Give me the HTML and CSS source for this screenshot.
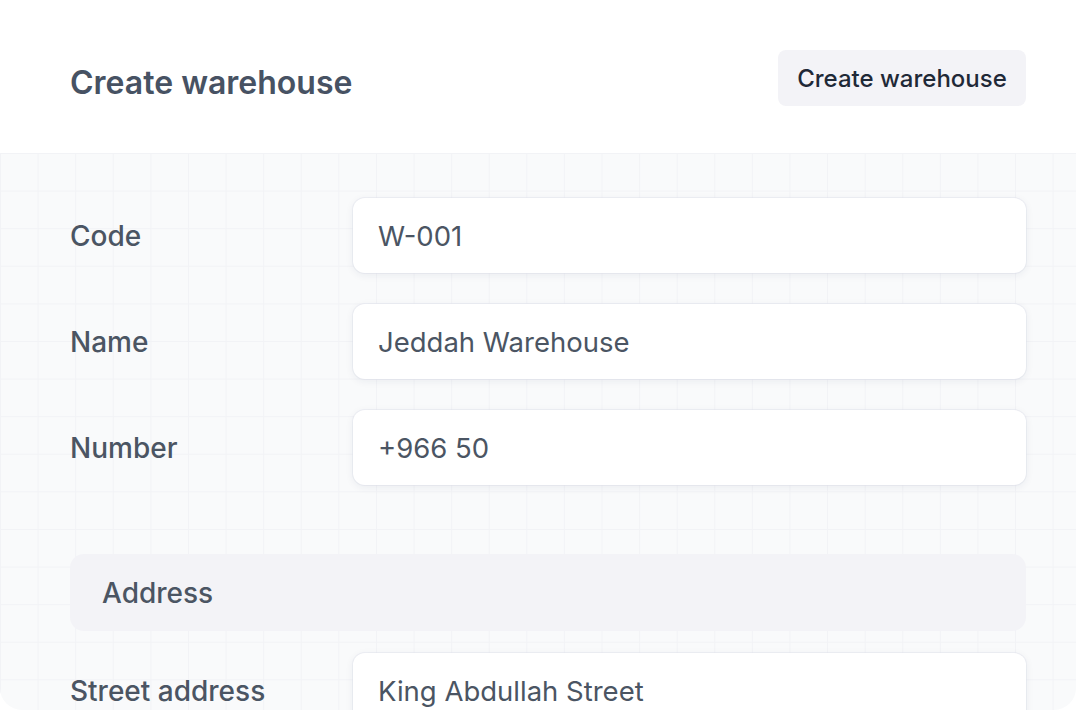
FILE: index.html
```html
<!DOCTYPE html>
<html lang="en">
  <head>
    <meta charset="UTF-8" />
    <meta name="viewport" content="width=device-width, initial-scale=1.0" />
    <title>Create warehouse</title>
    <link rel="stylesheet" href="styles.css">
  </head>
  <body>
    <div class="card">
      <div class="top">
        <h1 class="title">Create warehouse</h1>
        <button class="create">Create warehouse</button>
      </div>
      <form class="grid">
        <div class="row">
          <label>Code</label>
          <div class="field">W-001</div>
        </div>
        <div class="row">
          <label>Name</label>
          <div class="field">Jeddah Warehouse</div>
        </div>
        <div class="row">
          <label>Number</label>
          <div class="field">+966 50</div>
        </div>
        <div class="section">Address</div>
        <div class="row">
          <label>Street address</label>
          <div class="field">King Abdullah Street</div>
        </div>
      </form>
    </div>
  </body>
</html>
```

FILE: styles.css
```css
body {
  margin: 0;
  background-color: #ffffff;
  font-family: Inter, "Noto Sans", sans-serif;
  color: #4b5563;
  height: 710px;
  overflow: hidden;
}
.card {
  height: 710px;
  border-radius: 22px;
  overflow: hidden;
  background-color: #ffffff;
}
.top {
  height: 153px;
  display: flex;
  justify-content: space-between;
  align-items: center;
  padding: 0 50px 0 70px;
  background-color: #ffffff;
}
.title {
  margin: 0;
  font-size: 32px;
  font-weight: 600;
  color: #475263;
  padding-top: 12px;
}
.create {
  width: 248px;
  height: 56px;
  border: none;
  border-radius: 8px;
  background-color: #f3f3f7;
  font-family: inherit;
  font-size: 24px;
  font-weight: 500;
  color: #1f2937;
  margin-top: 3px;
}
.grid {
  height: 557px;
  padding: 45px 50px 0 70px;
  background-color: #f9fafb;
  background-image:
    linear-gradient(to right, #f2f3f6 1px, transparent 1px),
    linear-gradient(to bottom, #f2f3f6 1px, transparent 1px);
  background-size: 37.6px 37.6px;
}
.row {
  display: flex;
  align-items: center;
  margin-bottom: 31px;
}
.row label {
  width: 283px;
  flex-shrink: 0;
  font-size: 28px;
  font-weight: 500;
  color: #4b5563;
}
.field {
  flex: 1;
  height: 75px;
  display: flex;
  align-items: center;
  padding-left: 25px;
  background-color: #ffffff;
  border-radius: 12px;
  box-shadow: 0 2px 8px rgba(30, 40, 80, 0.07), 0 0 0 1px rgba(230, 232, 240, 0.5);
  font-size: 27.5px;
  color: #4b5563;
}
.section {
  margin-top: 69px;
  margin-bottom: 22px;
  height: 77px;
  display: flex;
  align-items: center;
  padding-left: 32px;
  border-radius: 14px;
  background-color: #f3f3f7;
  font-size: 28px;
  font-weight: 500;
  color: #4b5563;
}
```
